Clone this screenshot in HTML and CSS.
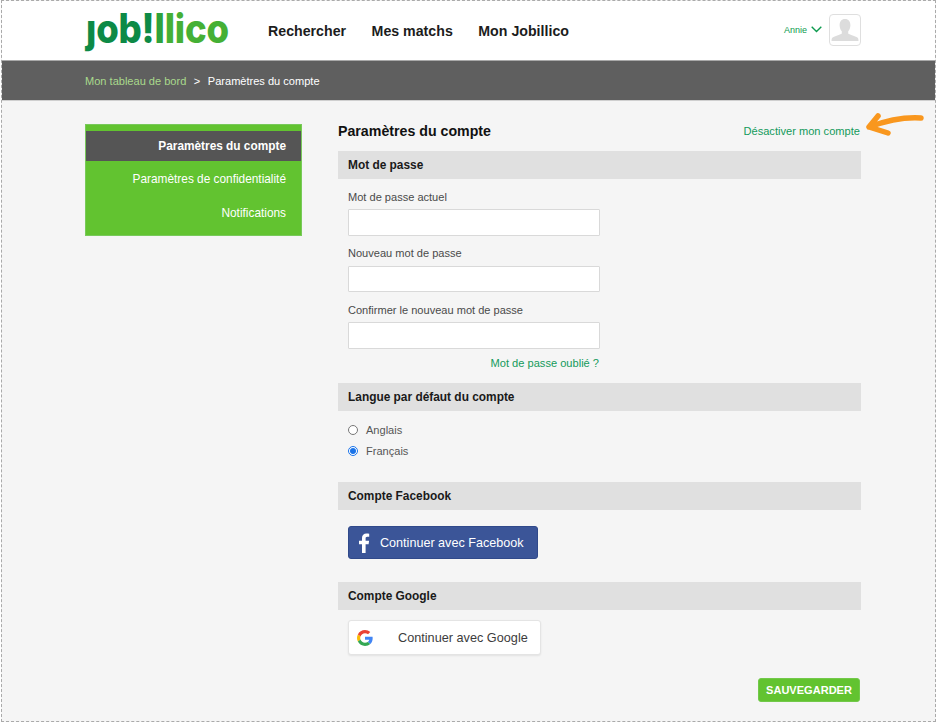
FILE: index.html
```html
<!DOCTYPE html>
<html lang="fr">
<head>
<meta charset="utf-8">
<title>Paramètres du compte</title>
<link rel="stylesheet" href="styles.css">
</head>
<body>
<div class="frame">
  <header class="topbar">
    <div class="logo" aria-label="Jobillico"><span class="logo-text"><span class="logo-dark">ȷob!</span><span class="logo-mid">l</span><span class="logo-light">lico</span></span></div>
    <nav class="nav">
      <a class="nav-link">Rechercher</a>
      <a class="nav-link">Mes matchs</a>
      <a class="nav-link">Mon Jobillico</a>
    </nav>
    <div class="user">
      <span class="user-name">Annie</span>
      <svg class="chevron" width="11" height="7" viewBox="0 0 11 7"><path d="M.7.8 5.500 5.600 10.300.8" fill="none" stroke="#0d9a4e" stroke-width="1.4"/></svg>
      <div class="avatar">
        <svg width="30" height="30" viewBox="0 0 30 30"><path d="M15 4c3.600 0 5.400 2.700 5.400 6.200 0 2.600-1 4.800-2.200 6.100v2.300c1 1 6.200 2.300 8.800 3.700 1 .6 1.500 1.500 1.500 3.700H1.500c0-2.200.5-3.100 1.500-3.700 2.600-1.400 7.800-2.700 8.800-3.700v-2.300c-1.200-1.300-2.200-3.500-2.200-6.100C9.600 6.700 11.400 4 15 4z" fill="#dcdcdc"/></svg>
      </div>
    </div>
  </header>
  <div class="crumbs">
    <a class="crumb-link">Mon tableau de bord</a>
    <span class="crumb-sep">&gt;</span>
    <span class="crumb-current">Paramètres du compte</span>
  </div>
  <div class="content">
    <aside class="side">
      <a class="side-item side-active">Paramètres du compte</a>
      <a class="side-item">Paramètres de confidentialité</a>
      <a class="side-item">Notifications</a>
    </aside>
    <main class="main">
      <div class="title-row">
        <h1 class="title">Paramètres du compte</h1>
        <a class="link">Désactiver mon compte</a>
        <svg class="arrow" width="60" height="24" viewBox="0 0 60 24"><path d="M57 5C42 4 24 7 5 14M14 3 5 14 24 20" fill="none" stroke="#f9971e" stroke-width="5.500" stroke-linecap="round" stroke-linejoin="round"/></svg>
      </div>
      <section>
        <h2 class="bar">Mot de passe</h2>
        <div class="fields">
          <label class="field"><span class="label">Mot de passe actuel</span><input class="input" type="password"></label>
          <label class="field"><span class="label">Nouveau mot de passe</span><input class="input" type="password"></label>
          <label class="field"><span class="label">Confirmer le nouveau mot de passe</span><input class="input" type="password"></label>
          <a class="link forgot">Mot de passe oublié ?</a>
        </div>
      </section>
      <section>
        <h2 class="bar">Langue par défaut du compte</h2>
        <div class="radios">
          <label class="radio"><input type="radio" name="lang"><span>Anglais</span></label>
          <label class="radio"><input type="radio" name="lang" checked><span>Français</span></label>
        </div>
      </section>
      <section>
        <h2 class="bar">Compte Facebook</h2>
        <a class="btn-fb">
          <svg width="12" height="20" viewBox="0 0 12 20"><path d="M7.600 20v-8.800h3l.5-3.500H7.600V5.500c0-1 .3-1.700 1.700-1.700h1.900V.7C10.900.6 9.800.5 8.500.5 5.800.5 4 2.100 4 5.100v2.600H1v3.500h3V20z" fill="#fff"/></svg>
          <span>Continuer avec Facebook</span>
        </a>
      </section>
      <section>
        <h2 class="bar">Compte Google</h2>
        <a class="btn-g">
          <svg width="16" height="16" viewBox="0 0 48 48"><path fill="#EA4335" d="M24 9.500c3.500 0 6.700 1.300 9.100 3.500l6.800-6.800C35.800 2.400 30.200 0 24 0 14.600 0 6.500 5.400 2.600 13.200l7.900 6.200C12.400 13.700 17.700 9.500 24 9.500z"/><path fill="#4285F4" d="M47 24.500c0-1.600-.1-3.100-.4-4.500H24v9h12.900c-.6 3-2.200 5.500-4.800 7.200l7.700 6C44.400 37.900 47 31.800 47 24.500z"/><path fill="#FBBC05" d="M10.500 28.600c-.5-1.400-.8-3-.8-4.600s.3-3.200.8-4.600l-7.900-6.200C.9 16.500 0 20.100 0 24s.9 7.500 2.600 10.800z"/><path fill="#34A853" d="M24 48c6.500 0 11.900-2.100 15.900-5.800l-7.700-6c-2.200 1.400-4.900 2.300-8.200 2.300-6.300 0-11.600-4.200-13.500-9.900l-7.900 6.200C6.500 42.600 14.600 48 24 48z"/></svg>
          <span>Continuer avec Google</span>
        </a>
      </section>
      <div class="actions"><button class="save" type="button">SAUVEGARDER</button></div>
    </main>
  </div>
</div>
</body>
</html>
```
FILE: styles.css
```css
* { box-sizing: border-box; }
html, body { margin: 0; height: 100%; }
body { background: #fff; font-family: "Liberation Sans", Arial, sans-serif; color: #222; overflow: hidden; }
a { text-decoration: none; cursor: pointer; }
.frame { width: 935px; height: 722px; margin-left: 1px; border: 1px dashed #aaa; background: #f5f5f5; overflow: hidden; }
.topbar { height: 59px; background: #fff; display: flex; align-items: center; padding: 0 74px 0 83px; }
.logo { width: 183px; padding-left: 1px; font-family: "Inter", sans-serif; font-weight: 800; font-size: 36.500px; line-height: 59px; letter-spacing: -.2px; }
.logo-text { display: inline-block; transform: scaleY(1.12); transform-origin: 50% 65%; }
.logo-dark { color: #0d8a46; }
.logo-mid { color: #2fa23c; }
.logo-light { color: #45b035; }
.nav { display: flex; gap: 25.500px; }
.nav-link { font-size: 14.2px; font-weight: 700; color: #1c1c1c; }
.user { margin-left: auto; display: flex; align-items: center; padding-bottom: 2px; }
.user-name { font-size: 9px; color: #0d9a4e; margin-right: 4px; }
.chevron { margin-right: 7px; }
.avatar { width: 32px; height: 32px; border: 1px solid #dfdfdf; border-radius: 4px; background: #fff; overflow: hidden; }
.avatar svg { display: block; }
.crumbs { height: 41px; background: #5f5f5f; border-top: 1px solid #a9a9a9; border-bottom: 1px solid #cfcfcf; display: flex; align-items: center; padding-left: 83px; font-size: 11.050px; gap: 7.500px; }
.crumb-link { color: #a9d98c; }
.crumb-sep { color: #fff; }
.crumb-current { color: #fff; }
.content { display: flex; align-items: flex-start; padding: 23px 0 0 83px; }
.side { width: 217px; margin-right: 36px; background: #62c330; border: 1px solid #78c95a; padding: 6px 0 7px; display: flex; flex-direction: column; }
.side-item { height: 33.500px; line-height: 33px; padding: 2px 15px 0 0; text-align: right; color: #fff; font-size: 11.850px; }
.side-active { height: 30px; line-height: 31px; padding-top: 0; background: #555; font-weight: 700; }
.main { width: 523px; position: relative; }
.title-row { display: flex; justify-content: space-between; align-items: flex-end; height: 27px; }
.title { margin: 0; font-size: 14.200px; line-height: 16px; padding-bottom: 12px; color: #111; }
.link { color: #139a5b; font-size: 11.100px; }
.title-row .link { line-height: 13px; padding: 0 1px 13px 0; }
.arrow { position: absolute; left: 526px; top: -11px; }
.bar { margin: 0; height: 28px; line-height: 28px; background: #e0e0e0; padding-left: 10px; font-size: 11.900px; font-weight: 700; color: #1a1a1a; }
.fields { width: 271px; padding: 10.500px 0 0 10px; display: flex; flex-direction: column; }
.field { display: flex; flex-direction: column; margin-bottom: 10.500px; }
.label { font-size: 11.050px; line-height: 14px; color: #4a4a4a; margin-bottom: 5.500px; }
.input { height: 26.500px; width: 251.500px; border: 1px solid #d9d9d9; background: #fff; border-radius: 1px; padding: 0 8px; display: block; }
.forgot { align-self: flex-start; margin-left: 142.500px; line-height: 14px; margin-top: -3px; height: 27px; }
.radios { padding: 8px 0 0 10px; height: 71px; }
.radio { display: flex; align-items: center; height: 21.500px; font-size: 11.050px; color: #555; }
.radio input { margin: 0 8px 0 0; width: 10px; height: 10px; accent-color: #1a73e8; }
.btn-fb { display: flex; align-items: center; width: 189.500px; height: 33px; margin: 16px 0 23px 10px; background: #3b5598; border: 1px solid #30498a; border-radius: 3px; color: #fff; font-size: 12.600px; padding-left: 9px; gap: 10px; }
.btn-g { display: flex; align-items: center; width: 193px; height: 35px; margin: 10px 0 0 10px; background: #fff; border: 1px solid #e4e4e4; border-radius: 3px; box-shadow: 0 1px 2px rgba(0,0,0,.08); color: #3c3c3c; font-size: 12.700px; padding-left: 8px; gap: 25px; }
.actions { display: flex; justify-content: flex-end; margin-top: 23px; padding-right: 1px; }
.save { width: 102px; height: 24px; padding: 0; background: #62c330; border: 1px solid #72c94a; border-radius: 3px; color: #fff; font-family: inherit; font-size: 11.050px; font-weight: 700; }
```
